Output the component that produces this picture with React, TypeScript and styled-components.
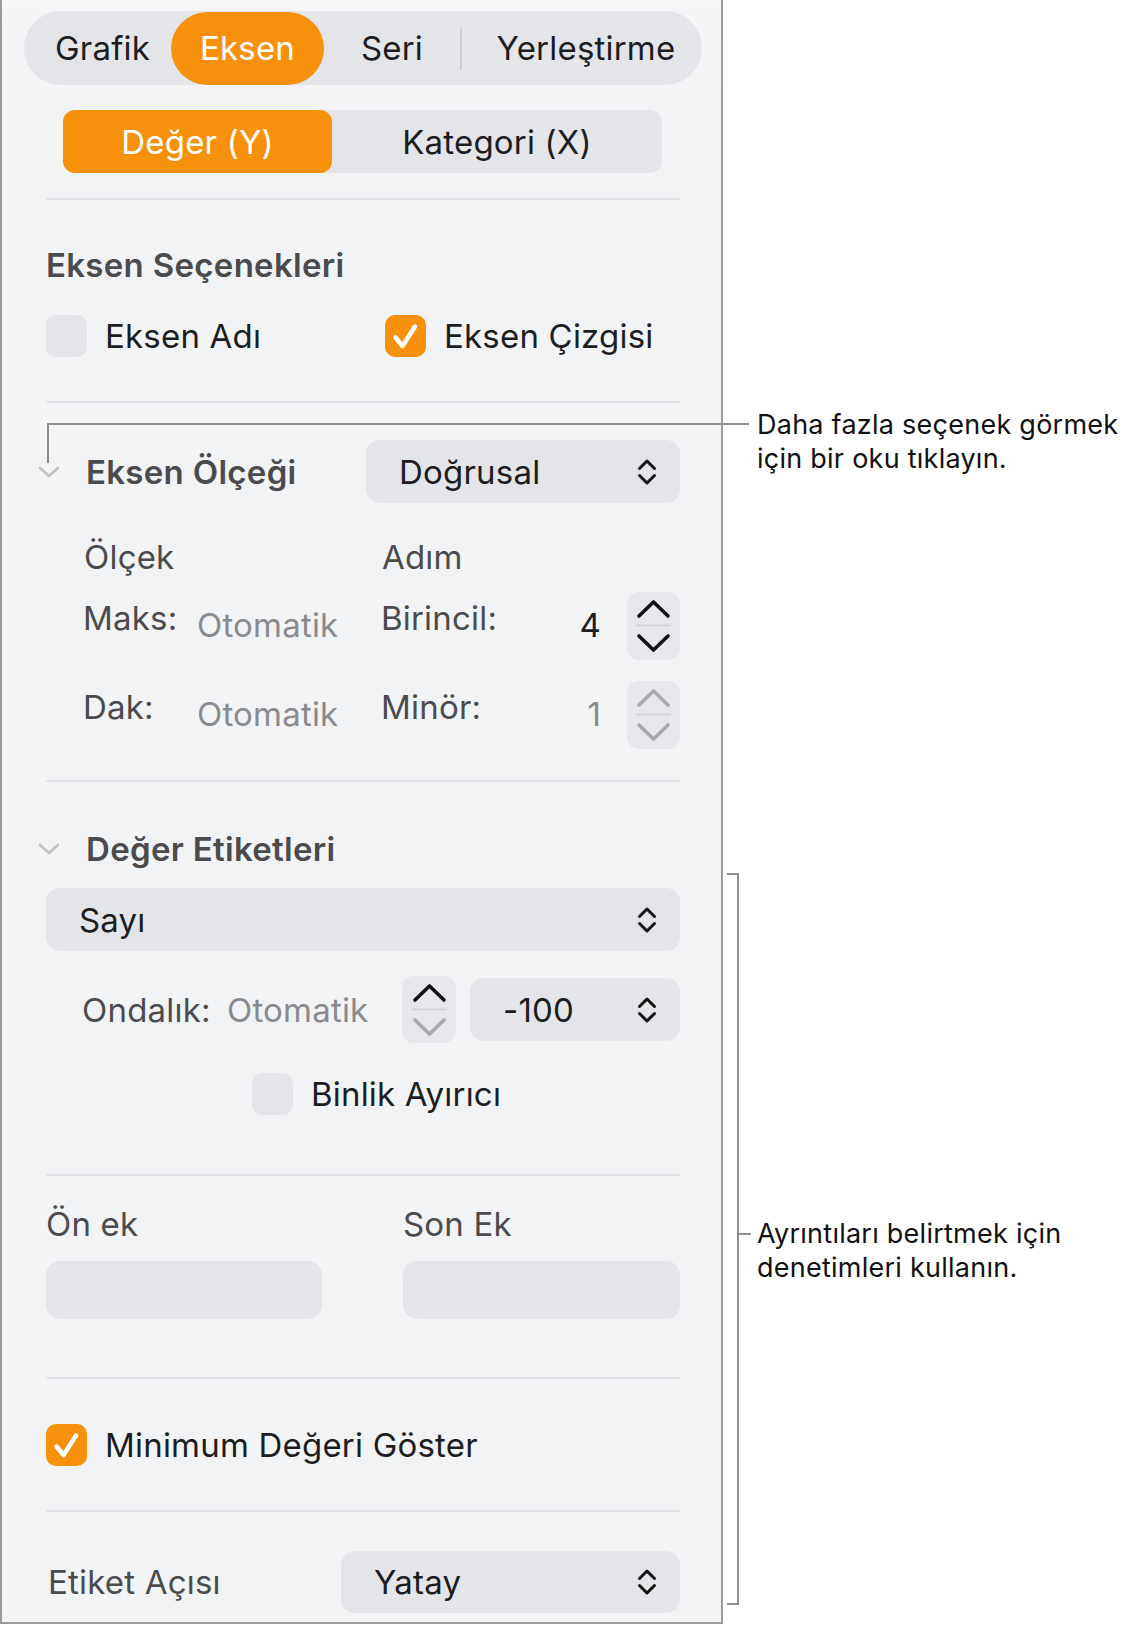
import React from "react";
import styled, { createGlobalStyle } from "styled-components";

const ORANGE = "#F7900B";
const CONTROL = "#E4E5E8";
const PANEL = "#F2F3F5";

const GlobalStyle = createGlobalStyle`
  html, body { margin: 0; padding: 0; background: #ffffff; }
  body { font-family: Inter, "Noto Sans", sans-serif; -webkit-font-smoothing: antialiased; }
  #root { width: 1129px; height: 1626px; }
`;

const Page = styled.div`
  position: relative;
  width: 1129px;
  height: 1626px;
  display: flex;
  align-items: flex-start;
  overflow: hidden;
`;

const Panel = styled.div`
  box-sizing: border-box;
  width: 723px;
  height: 1624px;
  background: linear-gradient(#f5f6f7, ${PANEL} 120px);
  border: 2px solid #9c9c9c;
  border-top: none;
  padding: 11px 41px 0 44px;
  display: flex;
  flex-direction: column;
  font-size: 33px;
  letter-spacing: 0.2px;
  color: #1d1d1f;
`;

const TabBar = styled.div`
  margin: 0 -22px;
  height: 74px;
  border-radius: 37px;
  background: ${CONTROL};
  display: flex;
  align-items: center;
`;

const Tab = styled.div<{ $w: number; $pl?: number; $active?: boolean }>`
  box-sizing: border-box;
  width: ${(p) => p.$w}px;
  height: 73px;
  padding-left: ${(p) => p.$pl ?? 0}px;
  border-radius: 37px;
  display: flex;
  align-items: center;
  justify-content: center;
  background: ${(p) => (p.$active ? ORANGE : "transparent")};
  color: ${(p) => (p.$active ? "#ffffff" : "#1d1d1f")};
`;

const TabDivider = styled.div`
  width: 2px;
  height: 43px;
  background: #cfd0d3;
`;

const Segmented = styled.div`
  margin: 25px 0 0 17px;
  width: 599px;
  height: 63px;
  border-radius: 12px;
  background: ${CONTROL};
  display: flex;
`;

const Segment = styled.div<{ $w: number; $active?: boolean }>`
  width: ${(p) => p.$w}px;
  height: 63px;
  border-radius: 12px;
  display: flex;
  align-items: center;
  justify-content: center;
  background: ${(p) => (p.$active ? ORANGE : "transparent")};
  color: ${(p) => (p.$active ? "#ffffff" : "#1d1d1f")};
`;

const Separator = styled.div<{ $mt: number }>`
  margin-top: ${(p) => p.$mt}px;
  height: 2px;
  flex: none;
  background: #e1e2e5;
`;

const SectionTitle = styled.div<{ $mt?: number }>`
  margin-top: ${(p) => p.$mt ?? 0}px;
  height: 40px;
  line-height: 40px;
  font-weight: 600;
  letter-spacing: 0.3px;
  color: #4b4b4d;
`;

const CheckRow = styled.div<{ $mt: number; $indent?: number; $cols?: string }>`
  margin-top: ${(p) => p.$mt}px;
  margin-left: ${(p) => p.$indent ?? 0}px;
  height: 42px;
  display: grid;
  grid-template-columns: ${(p) => p.$cols ?? "1fr"};
  align-items: center;
`;

const CheckItem = styled.div`
  display: flex;
  align-items: center;
  gap: 18px;
  white-space: nowrap;
`;

const Box = styled.div<{ $on?: boolean }>`
  width: 41px;
  height: 42px;
  border-radius: 10px;
  flex: none;
  background: ${(p) => (p.$on ? ORANGE : CONTROL)};
  display: flex;
  align-items: center;
  justify-content: center;
`;

const DisclosureRow = styled.div<{ $mt: number }>`
  margin-top: ${(p) => p.$mt}px;
  margin-left: -8px;
  height: 63px;
  display: flex;
  align-items: center;
`;

const DisclosureTitle = styled.div`
  margin-left: 26px;
  font-weight: 600;
  letter-spacing: 0.3px;
  color: #4b4b4d;
  line-height: 40px;
  white-space: nowrap;
`;

const Popup = styled.div<{ $w?: number; $h?: number; $mt?: number }>`
  box-sizing: border-box;
  width: ${(p) => (p.$w ? `${p.$w}px` : "100%")};
  height: ${(p) => p.$h ?? 63}px;
  margin-top: ${(p) => p.$mt ?? 0}px;
  margin-left: auto;
  flex: none;
  border-radius: 14px;
  background: ${CONTROL};
  padding: 0 23px 0 33px;
  display: flex;
  align-items: center;
  justify-content: space-between;
  color: #1d1d1f;
`;

const ScaleRow = styled.div<{ $mt: number; $h: number }>`
  margin: ${(p) => p.$mt}px 0 0 37px;
  height: ${(p) => p.$h}px;
  display: grid;
  grid-template-columns: 114px 184px 110px 136px 53px;
  align-items: center;
`;

const ColHead = styled.div<{ $span: string }>`
  grid-column: ${(p) => p.$span};
  color: #4b4b4d;
  line-height: 40px;
  padding-left: 1px;
`;

const FieldLabel = styled.div`
  color: #4b4b4d;
  padding-bottom: 16px;
  white-space: nowrap;
`;

const FieldValue = styled.div<{ $dim?: boolean; $right?: boolean }>`
  color: ${(p) => (p.$dim ? "#8a8a8c" : "#1d1d1f")};
  text-align: ${(p) => (p.$right ? "right" : "left")};
  padding-right: ${(p) => (p.$right ? 26 : 0)}px;
  padding-bottom: 2px;
  white-space: nowrap;
`;

const StepperBox = styled.div<{ $w?: number; $h?: number }>`
  width: ${(p) => p.$w ?? 53}px;
  height: ${(p) => p.$h ?? 68}px;
  flex: none;
  border-radius: 12px;
  background: #e6e7ea;
  display: flex;
  align-items: center;
  justify-content: center;
`;

const DecimalRow = styled.div`
  margin: 25px 0 0 36px;
  height: 67px;
  display: flex;
  align-items: center;
`;

const DecimalLabel = styled.div`
  width: 145px;
  flex: none;
  color: #4b4b4d;
  white-space: nowrap;
`;

const DecimalValue = styled.div`
  width: 175px;
  flex: none;
  color: #8a8a8c;
  white-space: nowrap;
`;

const DecimalPopupSlot = styled.div`
  margin-left: 14px;
  flex: 1;
  display: flex;
`;

const AffixGrid = styled.div`
  margin-top: 28px;
  display: grid;
  grid-template-columns: 276px 277px;
  column-gap: 81px;
  grid-template-rows: 40px 58px;
  row-gap: 17px;
`;

const AffixLabel = styled.div`
  line-height: 40px;
  color: #4b4b4d;
`;

const AffixField = styled.div`
  border-radius: 14px;
  background: ${CONTROL};
`;

const AngleRow = styled.div`
  margin-top: 39px;
  height: 62px;
  display: flex;
  align-items: center;
`;

const AngleLabel = styled.div`
  margin-left: 2px;
  color: #4b4b4d;
  white-space: nowrap;
`;

/* ---------- annotations (overlay) ---------- */

const HLine = styled.div<{ $x: number; $y: number; $w: number }>`
  position: absolute;
  left: ${(p) => p.$x}px;
  top: ${(p) => p.$y}px;
  width: ${(p) => p.$w}px;
  height: 2px;
  background: #8e8e8e;
`;

const VLine = styled.div<{ $x: number; $y: number; $h: number }>`
  position: absolute;
  left: ${(p) => p.$x}px;
  top: ${(p) => p.$y}px;
  width: 2px;
  height: ${(p) => p.$h}px;
  background: #8e8e8e;
`;

const Note = styled.div<{ $x: number; $y: number }>`
  position: absolute;
  left: ${(p) => p.$x}px;
  top: ${(p) => p.$y}px;
  font-size: 27px;
  line-height: 34px;
  letter-spacing: 0.25px;
  color: #111111;
  white-space: nowrap;
`;

/* ---------- icons ---------- */

const Check = () => (
  <svg width="41" height="42" viewBox="0 0 41 42">
    <path d="M10.5 22.5 L17.5 31 L30 11.5" fill="none" stroke="#fff" strokeWidth="4.5" strokeLinecap="round" strokeLinejoin="round" />
  </svg>
);

const Disclosure = () => (
  <svg width="22" height="14" viewBox="0 0 22 14">
    <path d="M2 3 L11 11 L20 3" fill="none" stroke="#c2c2c4" strokeWidth="2.6" strokeLinecap="round" strokeLinejoin="round" />
  </svg>
);

const UpDown = () => (
  <svg width="20" height="28" viewBox="0 0 20 28">
    <path d="M2.5 10.5 L10 3 L17.5 10.5" fill="none" stroke="#111" strokeWidth="3" strokeLinecap="round" strokeLinejoin="round" />
    <path d="M2.5 17.5 L10 25 L17.5 17.5" fill="none" stroke="#111" strokeWidth="3" strokeLinecap="round" strokeLinejoin="round" />
  </svg>
);

const StepIcon = ({ up, down }: { up: string; down: string }) => (
  <svg width="53" height="68" viewBox="0 0 53 68">
    <path d="M12 24 L26.5 10 L41 24" fill="none" stroke={up} strokeWidth="3.6" strokeLinecap="round" strokeLinejoin="round" />
    <rect x="9" y="32.5" width="35" height="2" fill="#d2d3d6" />
    <path d="M12 44 L26.5 58 L41 44" fill="none" stroke={down} strokeWidth="3.6" strokeLinecap="round" strokeLinejoin="round" />
  </svg>
);

const Stepper = ({ up, down }: { up: string; down: string }) => (
  <StepperBox>
    <StepIcon up={up} down={down} />
  </StepperBox>
);

export default function App() {
  return (
    <Page>
      <GlobalStyle />
      <Panel>
        <TabBar>
          <Tab $w={147} $pl={10}>Grafik</Tab>
          <Tab $w={153} $active>Eksen</Tab>
          <Tab $w={136}>Seri</Tab>
          <TabDivider />
          <Tab $w={240} $pl={8}>Yerleştirme</Tab>
        </TabBar>

        <Segmented>
          <Segment $w={269} $active>Değer (Y)</Segment>
          <Segment $w={330}>Kategori (X)</Segment>
        </Segmented>

        <Separator $mt={25} />

        <SectionTitle $mt={45}>Eksen Seçenekleri</SectionTitle>
        <CheckRow $mt={30} $cols="339px 1fr">
          <CheckItem>
            <Box />
            <span>Eksen Adı</span>
          </CheckItem>
          <CheckItem>
            <Box $on>
              <Check />
            </Box>
            <span>Eksen Çizgisi</span>
          </CheckItem>
        </CheckRow>

        <Separator $mt={44} />

        <DisclosureRow $mt={37}>
          <Disclosure />
          <DisclosureTitle>Eksen Ölçeği</DisclosureTitle>
          <Popup $w={314}>
            <span>Doğrusal</span>
            <UpDown />
          </Popup>
        </DisclosureRow>

        <ScaleRow $mt={34} $h={40}>
          <ColHead $span="1 / 3">Ölçek</ColHead>
          <ColHead $span="3 / 6">Adım</ColHead>
        </ScaleRow>

        <ScaleRow $mt={15} $h={68}>
          <FieldLabel>Maks:</FieldLabel>
          <FieldValue $dim>Otomatik</FieldValue>
          <FieldLabel>Birincil:</FieldLabel>
          <FieldValue $right>4</FieldValue>
          <Stepper up="#111" down="#111" />
        </ScaleRow>

        <ScaleRow $mt={21} $h={68}>
          <FieldLabel>Dak:</FieldLabel>
          <FieldValue $dim>Otomatik</FieldValue>
          <FieldLabel>Minör:</FieldLabel>
          <FieldValue $right $dim>1</FieldValue>
          <Stepper up="#a9a9ab" down="#a9a9ab" />
        </ScaleRow>

        <Separator $mt={31} />

        <DisclosureRow $mt={35}>
          <Disclosure />
          <DisclosureTitle>Değer Etiketleri</DisclosureTitle>
        </DisclosureRow>

        <Popup $h={63} $mt={8}>
          <span>Sayı</span>
          <UpDown />
        </Popup>

        <DecimalRow>
          <DecimalLabel>Ondalık:</DecimalLabel>
          <DecimalValue>Otomatik</DecimalValue>
          <StepperBox $w={54} $h={67}>
            <StepIcon up="#111" down="#a9a9ab" />
          </StepperBox>
          <DecimalPopupSlot>
            <Popup $h={63}>
              <span>-100</span>
              <UpDown />
            </Popup>
          </DecimalPopupSlot>
        </DecimalRow>

        <CheckRow $mt={30} $indent={206}>
          <CheckItem>
            <Box />
            <span>Binlik Ayırıcı</span>
          </CheckItem>
        </CheckRow>

        <Separator $mt={59} />

        <AffixGrid>
          <AffixLabel>Ön ek</AffixLabel>
          <AffixLabel>Son Ek</AffixLabel>
          <AffixField />
          <AffixField />
        </AffixGrid>

        <Separator $mt={58} />

        <CheckRow $mt={45}>
          <CheckItem>
            <Box $on>
              <Check />
            </Box>
            <span>Minimum Değeri Göster</span>
          </CheckItem>
        </CheckRow>

        <Separator $mt={44} />

        <AngleRow>
          <AngleLabel>Etiket Açısı</AngleLabel>
          <Popup $w={339} $h={62}>
            <span>Yatay</span>
            <UpDown />
          </Popup>
        </AngleRow>
      </Panel>

      {/* callout 1 */}
      <HLine $x={47} $y={423} $w={702} />
      <VLine $x={47} $y={423} $h={40} />
      <Note $x={757} $y={408}>
        Daha fazla seçenek görmek
        <br />
        için bir oku tıklayın.
      </Note>

      {/* callout 2: bracket */}
      <VLine $x={737} $y={873} $h={732} />
      <HLine $x={727} $y={873} $w={12} />
      <HLine $x={727} $y={1603} $w={12} />
      <HLine $x={737} $y={1233} $w={14} />
      <Note $x={757} $y={1217}>
        Ayrıntıları belirtmek için
        <br />
        denetimleri kullanın.
      </Note>
    </Page>
  );
}
